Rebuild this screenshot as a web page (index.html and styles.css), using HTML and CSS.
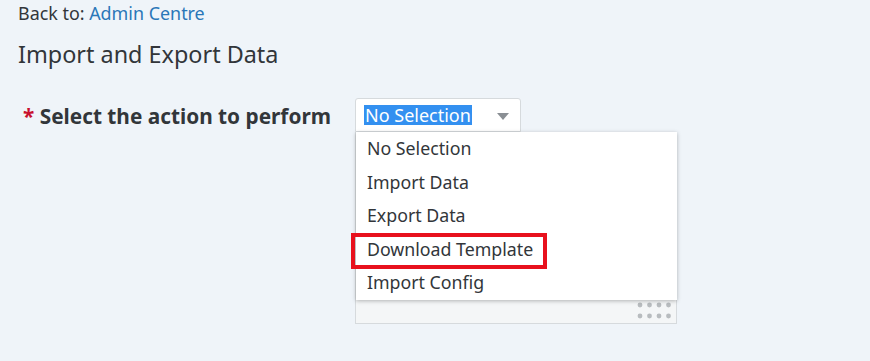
FILE: index.html
```html
<!DOCTYPE html>
<html>
<head>
<meta charset="utf-8">
<link rel="stylesheet" href="styles.css">
</head>
<body>
<div class="page">
  <div class="back">Back to: <a class="link" href="#">Admin Centre</a></div>
  <h1 class="title">Import and Export Data</h1>
  <div class="row">
    <div class="label"><span class="req">*</span> Select the action to perform</div>
    <div class="field">
      <div class="select">
        <span class="sel-text">No Selection</span>
        <svg class="arrow" width="12" height="7" viewBox="0 0 12 7"><path d="M0 0 L12 0 L6 7 Z" fill="#8a8f94"/></svg>
      </div>
      <div class="panel">
        <svg class="grip" width="40" height="21" viewBox="0 0 40 21">
          <g fill="#b8bcbf">
            <circle cx="4" cy="5" r="2.4"/><circle cx="13.5" cy="5" r="2.4"/><circle cx="23" cy="5" r="2.4"/><circle cx="32.5" cy="5" r="2.4"/>
            <circle cx="4" cy="16" r="2.4"/><circle cx="13.5" cy="16" r="2.4"/><circle cx="23" cy="16" r="2.4"/><circle cx="32.5" cy="16" r="2.4"/>
          </g>
        </svg>
      </div>
      <ul class="menu">
        <li class="item">No Selection</li>
        <li class="item">Import Data</li>
        <li class="item">Export Data</li>
        <li class="item">Download Template</li>
        <li class="item">Import Config</li>
        <li class="highlight"></li>
      </ul>
    </div>
  </div>
</div>
</body>
</html>
```
FILE: styles.css
```css
html, body {
  margin: 0;
  padding: 0;
  background: #eff4f9;
}
body {
  font-family: "Noto Sans", "Open Sans", sans-serif;
  color: #32363a;
  width: 870px;
  height: 361px;
  overflow: hidden;
}
.page {
  padding: 1px 0 0 18px;
}
.back {
  font-size: 17.9px;
  line-height: 24px;
  color: #32363a;
}
.link {
  color: #2a77b8;
  text-decoration: none;
}
.title {
  margin: 14px 0 0 0;
  font-size: 23.4px;
  font-weight: normal;
  line-height: 30px;
  color: #32363a;
}
.row {
  display: flex;
  margin-top: 29px;
  align-items: flex-start;
}
.label {
  width: 337px;
  padding: 4px 0 0 5px;
  box-sizing: border-box;
  font-size: 20.8px;
  font-weight: bold;
  line-height: 28px;
  color: #32363a;
}
.req {
  color: #c8102e;
}
.field {
  position: relative;
  width: 322px;
}
.select {
  width: 166px;
  height: 34px;
  box-sizing: border-box;
  border: 1px solid #d6dadd;
  border-radius: 3px 3px 0 0;
  background: #ffffff;
  display: flex;
  align-items: center;
  justify-content: space-between;
  padding: 0 11px 0 8px;
}
.sel-text {
  background: #3390f0;
  color: #ffffff;
  font-size: 18px;
  line-height: 20px;
  padding: 0 1px;
}
.arrow {
  margin-top: 3px;
}
.panel {
  height: 192px;
  box-sizing: border-box;
  border: 1px solid #d6dadd;
  border-top: none;
  background: #f4f6f7;
  display: flex;
  justify-content: flex-end;
  align-items: flex-end;
  padding: 0 0 2px 0;
}
.grip {
  display: block;
}
.menu {
  position: absolute;
  left: 1px;
  top: 34px;
  width: 321px;
  margin: 0;
  padding: 0;
  list-style: none;
  background: #ffffff;
  box-shadow: 0 1px 4px rgba(0, 0, 0, 0.28);
}
.item {
  height: 33.6px;
  line-height: 33.6px;
  padding-left: 11px;
  font-size: 17.75px;
  color: #32363a;
}
.highlight {
  position: absolute;
  left: -5px;
  top: 101px;
  width: 196px;
  height: 36px;
  box-sizing: border-box;
  border: 4px solid #e8111d;
}
```
